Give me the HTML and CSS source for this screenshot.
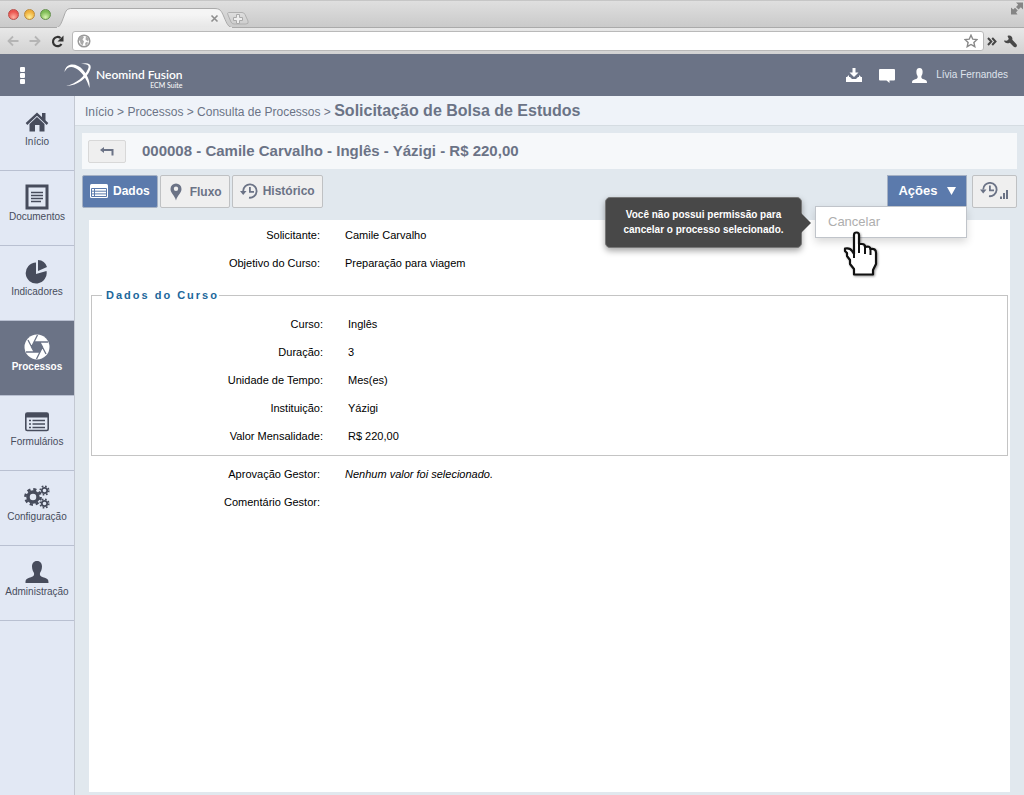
FILE: index.html
```html
<!DOCTYPE html>
<html lang="pt-BR">
<head>
<meta charset="utf-8">
<title>Neomind Fusion - Solicitação de Bolsa de Estudos</title>
<link rel="stylesheet" href="styles.css">
</head>
<body>
<div class="tabstrip">
  <div class="lights"><i class="light red"></i><i class="light amber"></i><i class="light green"></i></div>
  <svg class="tab" width="196" height="28" viewBox="0 0 196 28">
    <defs><linearGradient id="tabfill" x1="0" y1="0" x2="0" y2="1"><stop offset="0.3" stop-color="#f5f5f5"/><stop offset="1" stop-color="#e6e6e6"/></linearGradient>
    <linearGradient id="newfill" x1="0" y1="0" x2="0" y2="1"><stop offset="0" stop-color="#dedede"/><stop offset="1" stop-color="#cecece"/></linearGradient></defs>
    <path d="M1 28C5 27 6 24 9 16C11 10 12 8.500 17 8.500H159C165 8.500 166 10 169 17C172 24 173 27 178 28Z" fill="url(#tabfill)" stroke="#aaa"/>
    <path d="M2 28H177" stroke="#e8e8e8" stroke-width="2"/>
    <path d="M156.500 15.500l6 6m0-6l-6 6" stroke="#8e8e8e" stroke-width="1.600"/>
    <path d="M173.500 12.500H187Q189 12.500 190 14.500L193 21Q194 24 191 24H179Q177 24 176 22L173 15Q172 12.500 173.500 12.500Z" fill="url(#newfill)" stroke="#b0b0b0"/>
    <path d="M181.500 14.500h3v3h3v3h-3v3h-3v-3h-3v-3h3z" fill="#eee" stroke="#aaa"/>
  </svg>
  <svg class="expand" width="14" height="14" viewBox="0 0 14 14" fill="#858585"><path d="M6 1.500H13V8.500L10.800 6.300L8.600 8.500L6 6L8.200 3.800ZM1 6.500L3.200 8.500L5 6.700L7.800 9.500L6 11.300L7.500 13.500H1Z"/></svg>
</div>
<div class="browserbar">
  <button class="chrome-btn" aria-label="Voltar"><svg width="12" height="12" viewBox="0 0 12 12" fill="none" stroke="#b5b5b5" stroke-width="1.800"><path d="M11.500 6H1.500M6 1.500L1.500 6L6 10.500"/></svg></button>
  <button class="chrome-btn" aria-label="Avançar"><svg width="12" height="12" viewBox="0 0 12 12" fill="none" stroke="#b5b5b5" stroke-width="1.800"><path d="M.5 6H10.500M6 1.500L10.500 6L6 10.500"/></svg></button>
  <button class="chrome-btn" aria-label="Recarregar"><svg width="13" height="13" viewBox="0 0 13 13"><path d="M10.500 9A4.600 4.600 0 1 1 9.500 3" fill="none" stroke="#333" stroke-width="2.200"/><path d="M12.500.5V6.500H6.500Z" fill="#333"/></svg></button>
  <div class="omnibox">
    <svg width="14" height="14" viewBox="0 0 14 14"><circle cx="7" cy="7" r="5.800" fill="#fff" stroke="#999" stroke-width="1.500"/><path d="M2 4L5 1.500L7 3L5.500 5.500L7 7.500L5.500 11.500L3.500 9.500L3 7L1.500 6ZM9 2L12 5L11 7.500L8.500 5.500ZM9 8L11.500 8.500L9 11.500L8 10Z" fill="#aaa"/></svg>
    <input type="text" aria-label="Endereço">
    <svg width="14" height="14" viewBox="0 0 14 14"><path d="M7 1.200L8.800 5.200L13 5.600L9.900 8.500L10.800 12.700L7 10.500L3.200 12.700L4.100 8.500L1 5.600L5.200 5.200Z" fill="#fff" stroke="#888" stroke-width="1.400"/></svg>
  </div>
  <button class="chrome-btn more" aria-label="Mais"><svg width="10" height="9" viewBox="0 0 10 9" fill="none" stroke="#444" stroke-width="2"><path d="M1 1L4.300 4.500L1 8M5.200 1L8.500 4.500L5.200 8"/></svg></button>
  <button class="chrome-btn wrench" aria-label="Ferramentas"><svg width="15" height="13" viewBox="0 0 15 13" fill="#484848"><path d="M1 5.500L4 5.800L5.800 4L4.500 1C7.500-.5 10 2 9.300 4.800L13.500 9.200Q14.500 11 13.200 12Q11.500 13 10 11L6.800 7.800C4 9 1.500 8 1 5.500Z"/></svg></button>
</div>

<header class="header">
  <button class="menu-btn" aria-label="Menu"><i></i><i></i><i></i></button>
  <a class="logo" href="#">
    <svg width="28" height="27" viewBox="0 0 28 27" fill="#fff"><path d="M.5 10C2 0 13 1 19 8C25 15 26 21 25.500 26C23 18 20 13 15 8.500C9 3 3 4 .5 10Z"/><path d="M17 2C24 0 28.500 2 26 8C23.500 15 14 24 2 24C12 22 21 14 24 7C26 3 23 1.500 17 2Z"/></svg>
    <span class="brand"><strong>Neomind Fusion</strong><small>ECM Suite</small></span>
  </a>
  <nav class="header-tools" aria-label="Usuário">
    <a href="#" aria-label="Downloads"><svg width="16" height="15" viewBox="0 0 16 15" fill="#fff"><path d="M6.500 0h3v4.500h3L8 9L3.500 4.500h3ZM0 9h4l2 2h4l2-2h4v5H0Z"/><path d="M1 9l2-2v3zM15 9l-2-2v3z"/></svg></a>
    <a href="#" aria-label="Mensagens"><svg width="18" height="15" viewBox="0 0 18 15" fill="#fff"><path d="M1 2Q1 1 2 1H16Q17 1 17 2V11.500Q17 12.500 16 12.500H11.500V15L8.500 12.500H2Q1 12.500 1 11.500Z"/></svg></a>
    <a class="user" href="#"><svg width="15" height="15" viewBox="0 0 24 24" fill="#fff"><path d="M12 0C8.500 0 7 2.500 7 6C7 10 8.500 12 9 13C9.500 16 8 17 5 18C1 19.500 0 20 0 24H24C24 20 23 19.500 19 18C16 17 14.500 16 15 13C15.500 12 17 10 17 6C17 2.500 15.500 0 12 0Z"/></svg><span>Lívia Fernandes</span></a>
  </nav>
</header>

<div class="app">
  <nav class="sidebar" aria-label="Principal">
    <a href="#"><svg width="24" height="24" viewBox="0 0 24 24"><path d="M1.500 14L12 4.200L22.500 14" fill="none" stroke="#474c5c" stroke-width="2.400"/><path d="M17 3h3.500v8L17 8zM4.500 14L12 7L19.500 14V21.500H14.500V15H10V21.500H4.500Z" fill="#474c5c"/></svg>Início</a>
    <a href="#"><svg width="24" height="26" viewBox="0 0 24 26"><rect x="2" y="2" width="20" height="22" fill="none" stroke="#474c5c" stroke-width="3"/><path d="M6 8.500H18M6 11.500H18M6 14.500H18M6 17.500H16" stroke="#474c5c" stroke-width="1.400"/></svg>Documentos</a>
    <a href="#"><svg width="24" height="26" viewBox="0 0 24 26" fill="#474c5c"><path d="M11 3.500A10.500 10.500 0 1 0 21.500 12L11 15Z"/><path d="M13 1A10 10 0 0 1 22 8L13 12Z"/></svg>Indicadores</a>
    <a class="active" href="#" aria-current="page"><svg width="26" height="26" viewBox="0 0 26 26"><circle cx="13" cy="13" r="12.500" fill="#fff"/><path d="M10.300 8L15.700 8L18.500 13L15.700 18L10.300 18L7.500 13ZM10.300 8H24M15.700 8L22 20M18.500 13L12.500 25M15.700 18H2M10.300 18L4 6M7.500 13L13.500 1" fill="#6b7386" stroke="#6b7386" stroke-width="1.300"/></svg>Processos</a>
    <a href="#"><svg width="24" height="20" viewBox="0 0 24 20"><rect x=".8" y="1" width="22.400" height="17.500" rx="1.500" fill="none" stroke="#474c5c" stroke-width="1.600"/><path d="M1 1h22v4.500H1Z" fill="#474c5c"/><path d="M4 8.500h2M4 12h2M4 15.500h2M7.500 8.500H20M7.500 12H20M7.500 15.500H20" stroke="#474c5c" stroke-width="1.700"/></svg>Formulários</a>
    <a href="#"><svg width="26" height="24" viewBox="0 0 26 24" fill="none" stroke="#474c5c"><circle cx="9" cy="12" r="5" stroke-width="3.500"/><circle cx="9" cy="12" r="7.600" stroke-width="2.600" stroke-dasharray="3.200 2.770"/><circle cx="20.500" cy="5.500" r="2.700" stroke-width="1.800"/><circle cx="20.500" cy="5.500" r="4.300" stroke-width="1.600" stroke-dasharray="1.700 1.680"/><circle cx="20.500" cy="18.500" r="2.700" stroke-width="1.800"/><circle cx="20.500" cy="18.500" r="4.300" stroke-width="1.600" stroke-dasharray="1.700 1.680"/></svg>Configuração</a>
    <a href="#"><svg width="24" height="22" viewBox="0 0 24 22" fill="#474c5c"><path d="M12 0C8.500 0 7 2.500 7 5.500C7 9 8.500 11 9 12C9.500 15 8 15.500 5 16.500C1 18 .5 18.500.5 22H23.500C23.500 18.500 23 18 19 16.500C16 15.500 14.500 15 15 12C15.500 11 17 9 17 5.500C17 2.500 15.500 0 12 0Z"/></svg>Administração</a>
  </nav>

  <div class="main">
    <nav class="breadcrumb" aria-label="Localização"><a href="#">Início</a> &gt; <a href="#">Processos</a> &gt; <a href="#">Consulta de Processos</a> &gt; <strong>Solicitação de Bolsa de Estudos</strong></nav>
    <main class="content">
      <div class="titlebar">
        <button class="btn back" aria-label="Voltar à consulta"><svg width="14" height="9" viewBox="0 0 14 9"><path d="M0 3L4 0V6Z" fill="#6b7386"/><path d="M3 3H12.500V8.500" fill="none" stroke="#6b7386" stroke-width="2"/></svg></button>
        <h1>000008 - Camile Carvalho - Inglês - Yázigi - R$ 220,00</h1>
      </div>
      <div class="toolbar">
        <button class="btn primary"><svg width="18" height="14" viewBox="0 0 18 14"><rect width="18" height="14" rx="1.500" fill="#fff"/><path d="M1.500 4.500h15v8h-15zM4.500 4.500v8M1.500 7.200h15M1.500 9.900h15" fill="none" stroke="#5b7aac"/></svg>Dados</button>
        <button class="btn pin"><svg width="12" height="18" viewBox="0 0 12 18"><path fill-rule="evenodd" d="M6 .5A5.500 5.500 0 0 0 .5 6C.5 10 4.500 12 6 17.500C7.500 12 11.500 10 11.500 6A5.500 5.500 0 0 0 6 .5ZM6 3.500A2.200 2.200 0 1 1 6 7.900A2.200 2.200 0 1 1 6 3.500Z" fill="#6b7386"/></svg>Fluxo</button>
        <button class="btn"><svg width="18" height="16" viewBox="0 0 18 16"><path d="M3.200 8A6.700 6.700 0 1 1 9 14.700" fill="none" stroke="#6b7386" stroke-width="1.800"/><path d="M0 8H6.500L3.200 12ZM9 4h1.800v4H14v1.700H9Z" fill="#6b7386"/></svg>Histórico</button>
        <div class="actions">
          <button class="btn actions-btn" aria-expanded="true">Ações<svg width="9" height="8" viewBox="0 0 9 8"><path d="M0 0H9L4.500 8Z" fill="#fff"/></svg></button>
          <div class="dropdown">
            <button class="option" aria-disabled="true" aria-describedby="cancel-tip">Cancelar</button>
            <div class="tooltip" role="tooltip" id="cancel-tip">Você não possui permissão para cancelar o processo selecionado.</div>
            <svg class="pointer" width="36" height="46" viewBox="0 0 36 46"><path d="M11 16V4Q11 1.500 13.500 1.500Q16 1.500 16 4V13H19Q22 13 22 16Q27 14.500 27.500 18Q33 17 33 22V33L30 39V43.500H11V38L7 33V29L4 25V22L2 20V17.500Q7 16.500 9 20L11 23Z" fill="#fff" stroke="#111" stroke-width="2.200" stroke-linejoin="round"/><path d="M11 14V27M16 12V22M22 15V23M27.500 17V24" stroke="#111" stroke-width="2"/></svg>
          </div>
        </div>
        <button class="btn stats" aria-label="Histórico de indicadores"><svg width="29" height="18" viewBox="0 0 29 18"><path d="M3.200 7.500A6.700 6.700 0 1 1 9 14.200" fill="none" stroke="#6b7386" stroke-width="1.800"/><path d="M0 7.500H6.500L3.200 11.500ZM9 3.500h1.800v4H14v1.700H9ZM20 14.500h2v2.500h-2zM23 11h2v6h-2zM26 8h2v9h-2z" fill="#6b7386"/></svg></button>
      </div>
      <section class="panel">
        <dl class="fields">
          <div><dt>Solicitante:</dt><dd>Camile Carvalho</dd></div>
          <div><dt>Objetivo do Curso:</dt><dd>Preparação para viagem</dd></div>
        </dl>
        <fieldset>
          <legend>Dados do Curso</legend>
          <dl class="fields">
            <div><dt>Curso:</dt><dd>Inglês</dd></div>
            <div><dt>Duração:</dt><dd>3</dd></div>
            <div><dt>Unidade de Tempo:</dt><dd>Mes(es)</dd></div>
            <div><dt>Instituição:</dt><dd>Yázigi</dd></div>
            <div><dt>Valor Mensalidade:</dt><dd>R$ 220,00</dd></div>
          </dl>
        </fieldset>
        <dl class="fields">
          <div><dt>Aprovação Gestor:</dt><dd><em>Nenhum valor foi selecionado.</em></dd></div>
          <div><dt>Comentário Gestor:</dt><dd></dd></div>
        </dl>
      </section>
    </main>
  </div>
</div>
</body>
</html>
```
FILE: styles.css
```css
* { box-sizing: border-box; }
body {
  margin: 0;
  min-height: 100vh;
  display: flex;
  flex-direction: column;
  font: 12px/16px "Liberation Sans", Arial, sans-serif;
  color: #6b7386;
}
a { color: inherit; text-decoration: none; }
button { font: inherit; color: inherit; cursor: pointer; }
svg { display: block; flex: none; }

/* Browser frame */
.tabstrip {
  display: flex;
  align-items: flex-start;
  height: 28px;
  padding-left: 8px;
  background: linear-gradient(#dfdfdf, #c9c9c9);
  border-top: 1px solid #c6c6c6;
  box-shadow: inset 0 -1px #aaa;
}
.lights { display: flex; gap: 5px; padding-top: 8px; margin-right: 4px; }
.light { width: 11px; height: 11px; border-radius: 50%; border: 1px solid; }
.red { background: radial-gradient(circle at 50% 80%, #ffb0a0, #ea554f 65%); border-color: #b84f4a; }
.amber { background: radial-gradient(circle at 50% 80%, #fff09a, #efaf3b 65%); border-color: #b98a3c; }
.green { background: radial-gradient(circle at 50% 80%, #d9f5b0, #7dbb55 65%); border-color: #65904c; }
.tab { margin-top: -1px; }
.expand { margin-left: auto; }
.browserbar {
  display: flex;
  align-items: center;
  gap: 10px;
  height: 26px;
  padding: 0 6px 0 7px;
  background: linear-gradient(#e8e8e8, #d2d2d2);
}
.chrome-btn { display: flex; padding: 0; border: 0; background: none; }
.omnibox {
  flex: 1;
  display: flex;
  align-items: center;
  height: 20px;
  margin-left: -2px;
  padding: 0 5px 0 4px;
  background: #fff;
  border: 1px solid #b9b9b9;
  border-radius: 3px;
}
.omnibox input { flex: 1; min-width: 0; border: 0; padding: 0 6px; background: none; outline: 0; }
.more { margin-left: -7px; }
.wrench { margin-left: -4px; }

/* Application header */
.header {
  display: flex;
  align-items: center;
  height: 42px;
  padding: 0 16px 0 19px;
  background: #6b7386;
  color: #fff;
}
.menu-btn { display: flex; flex-direction: column; gap: 1px; padding: 0 1px; border: 0; background: none; }
.menu-btn i { width: 5px; height: 5px; border-radius: 1px; background: #fff; }
.logo { display: flex; align-items: center; gap: 4px; margin-left: 38px; }
.brand { display: flex; flex-direction: column; padding-top: 8px; font-family: Lato, sans-serif; }
.brand strong { font-size: 12px; line-height: 13px; font-weight: 600; }
.brand small { font-size: 7px; line-height: 9px; text-align: right; }
.header-tools { display: flex; align-items: center; gap: 16px; margin-left: auto; }
.user { display: flex; align-items: center; gap: 9px; font-size: 10px; color: #dfe3ec; }

/* Sidebar */
.app { flex: 1; display: flex; }
.sidebar { width: 75px; flex: none; background: #e2e8f4; border-right: 1px solid #c3c8d2; }
.sidebar a {
  display: grid;
  grid-template-rows: 26px 12px;
  gap: 1px;
  justify-items: center;
  align-items: center;
  height: 75px;
  padding-top: 13px;
  align-content: start;
  border-bottom: 1px solid #b9c0d1;
  font-size: 10px;
  line-height: 12px;
  color: #474c5c;
}
.sidebar .active { background: #6b7386; color: #fff; font-weight: bold; }

/* Main column */
.main { flex: 1; min-width: 0; display: flex; flex-direction: column; background: #e1e8ee; }
.breadcrumb { height: 30px; padding: 5px 10px 0; line-height: 20px; background: #eff3f9; border-bottom: 1px solid #d5dce2; }
.breadcrumb strong { font-size: 16px; }
.content { flex: 1; display: flex; flex-direction: column; padding: 7px 7px 3px; }
.titlebar { display: flex; align-items: center; gap: 16px; height: 36px; padding: 0 6px; background: #f6f8fa; }
.titlebar h1 { margin: 0; font-size: 15px; line-height: 18px; }
.btn {
  display: flex;
  align-items: center;
  justify-content: center;
  gap: 5px;
  height: 33px;
  padding: 0 7px 2px;
  border: 1px solid #bfc1c3;
  border-radius: 2px;
  background: #efefef;
  font-weight: bold;
}
.back { width: 38px; height: 23px; padding-bottom: 0; border-color: #d8d8d8; }
.primary { background: #5b7aac; border-color: #a5b1c4; color: #fff; }
.pin { gap: 8px; padding: 0 7px 0 9px; }
.toolbar { display: flex; gap: 2px; margin: 6px 0 12px; }
.actions { position: relative; height: 31px; margin: 0 3px 0 auto; }
.actions-btn {
  width: 80px;
  height: 31px;
  gap: 9px;
  padding-bottom: 0;
  border-color: #a5b1c4;
  border-bottom: 0;
  border-radius: 0;
  background: #5b7aac;
  color: #fff;
  font-size: 13px;
}
.stats { width: 45px; }
.dropdown {
  position: absolute;
  top: 100%;
  right: 0;
  width: 152px;
  background: #fff;
  border: 1px solid #c0c4ca;
  box-shadow: 0 4px 8px rgba(0, 0, 0, .15);
}
.option { display: block; width: 100%; padding: 7px 12px; border: 0; background: none; text-align: left; font-size: 13px; color: #aeaeae; }
.tooltip {
  position: absolute;
  top: -10px;
  right: calc(100% + 14px);
  width: 197px;
  padding: 9px 12px 10px;
  border: 1px solid #777;
  border-radius: 5px;
  background: #484848;
  box-shadow: 0 3px 6px rgba(0, 0, 0, .35);
  color: #fff;
  font-size: 10px;
  line-height: 15px;
  font-weight: bold;
  text-align: center;
}
.tooltip::after {
  content: "";
  position: absolute;
  top: 15px;
  left: 100%;
  border: 10px solid transparent;
  border-right: 0;
  border-left-color: #484848;
}
.pointer { position: absolute; top: 24px; left: 27px; filter: drop-shadow(1px 1px 1px rgba(0, 0, 0, .4)); }

/* Form panel */
.panel { flex: 1; margin: 0 7px; padding-top: 1px; background: #fff; color: #000; font-size: 11px; }
.fields { margin: 0; }
.fields div { display: grid; grid-template-columns: 231px 1fr; gap: 25px; align-items: center; height: 28px; }
.fields dt { text-align: right; }
.fields dd { margin: 0; }
fieldset { margin: 11px 2px 4px; padding: 8px 0 5px; border: 1px solid #c4c4c4; }
legend { margin-left: 10px; padding: 0 0 0 4px; font-size: 11px; line-height: 14px; font-weight: bold; letter-spacing: 2px; color: #1c679b; }
```
